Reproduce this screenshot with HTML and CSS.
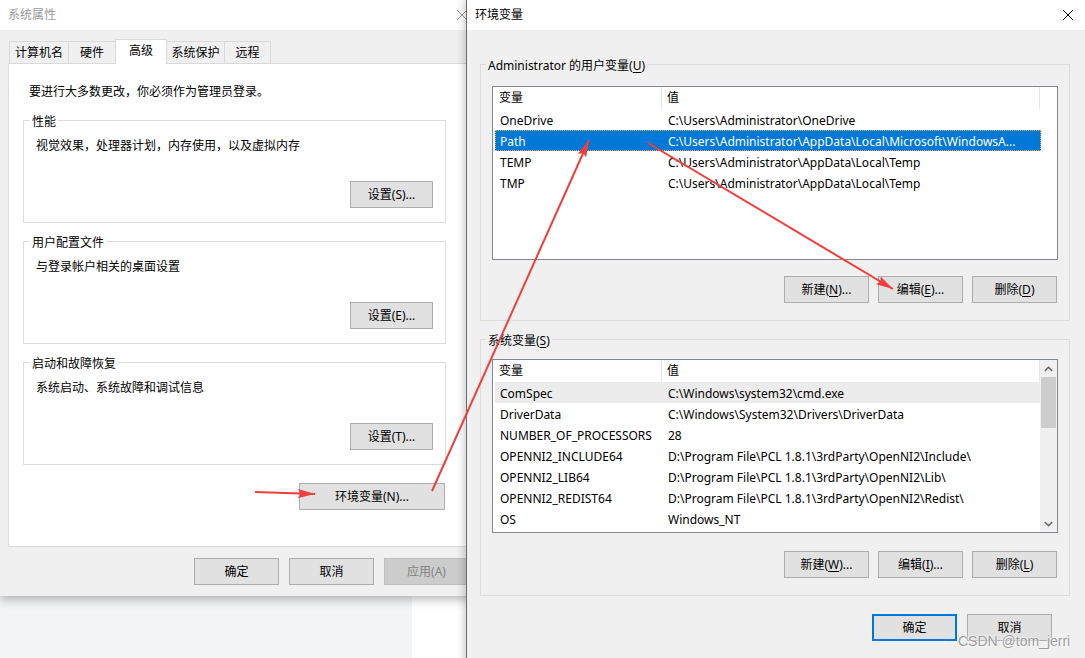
FILE: index.html
```html
<!DOCTYPE html>
<html lang="zh-CN">
<head>
<meta charset="UTF-8">
<title>环境变量</title>
<link rel="stylesheet" href="styles.css">
</head>
<body>
  <div class="win sysprop">
    <div class="titlebar">
      <span class="title">系统属性</span>
      <svg class="close" width="10" height="10" viewBox="0 0 10 10"><path d="M0 0L10 10M10 0L0 10"/></svg>
    </div>
    <div class="body">
      <div class="tabs">
        <span class="tab t1">计算机名</span>
        <span class="tab t2">硬件</span>
        <span class="tab t3 on">高级</span>
        <span class="tab t4">系统保护</span>
        <span class="tab t5">远程</span>
      </div>
      <div class="panel">
        <p class="intro">要进行大多数更改，你必须作为管理员登录。</p>
        <fieldset class="group first">
          <legend>性能</legend>
          <p>视觉效果，处理器计划，内存使用，以及虚拟内存</p>
          <div class="btnrow"><button class="btn small">设置(S)...</button></div>
        </fieldset>
        <fieldset class="group">
          <legend>用户配置文件</legend>
          <p>与登录帐户相关的桌面设置</p>
          <div class="btnrow"><button class="btn small">设置(E)...</button></div>
        </fieldset>
        <fieldset class="group">
          <legend>启动和故障恢复</legend>
          <p>系统启动、系统故障和调试信息</p>
          <div class="btnrow"><button class="btn small">设置(T)...</button></div>
        </fieldset>
        <div class="btnrow env-row"><button class="btn wide">环境变量(N)...</button></div>
      </div>
      <div class="dlg-buttons">
        <button class="btn">确定</button>
        <button class="btn">取消</button>
        <button class="btn" disabled>应用(A)</button>
      </div>
    </div>
  </div>

  <div class="win envvars">
    <div class="titlebar">
      <span class="title">环境变量</span>
      <svg class="close" width="10" height="10" viewBox="0 0 10 10"><path d="M0 0L10 10M10 0L0 10"/></svg>
    </div>
    <div class="body">
      <fieldset class="group user">
        <legend>Administrator 的用户变量(<u>U</u>)</legend>
        <div class="lv">
          <div class="lv-main">
            <div class="lv-head"><span class="c1">变量</span><span class="c2">值</span></div>
            <div class="lv-row"><span class="c1">OneDrive</span><span class="c2">C:\Users\Administrator\OneDrive</span></div>
            <div class="lv-row sel"><span class="c1">Path</span><span class="c2">C:\Users\Administrator\AppData\Local\Microsoft\WindowsA...</span></div>
            <div class="lv-row"><span class="c1">TEMP</span><span class="c2">C:\Users\Administrator\AppData\Local\Temp</span></div>
            <div class="lv-row"><span class="c1">TMP</span><span class="c2">C:\Users\Administrator\AppData\Local\Temp</span></div>
          </div>
        </div>
        <div class="btnrow">
          <button class="btn">新建(<u>N</u>)...</button>
          <button class="btn">编辑(<u>E</u>)...</button>
          <button class="btn">删除(<u>D</u>)</button>
        </div>
      </fieldset>

      <fieldset class="group system">
        <legend>系统变量(<u>S</u>)</legend>
        <div class="lv">
          <div class="lv-main">
            <div class="lv-head"><span class="c1">变量</span><span class="c2">值</span></div>
            <div class="lv-row hover"><span class="c1">ComSpec</span><span class="c2">C:\Windows\system32\cmd.exe</span></div>
            <div class="lv-row"><span class="c1">DriverData</span><span class="c2">C:\Windows\System32\Drivers\DriverData</span></div>
            <div class="lv-row"><span class="c1">NUMBER_OF_PROCESSORS</span><span class="c2">28</span></div>
            <div class="lv-row"><span class="c1">OPENNI2_INCLUDE64</span><span class="c2">D:\Program File\PCL 1.8.1\3rdParty\OpenNI2\Include\</span></div>
            <div class="lv-row"><span class="c1">OPENNI2_LIB64</span><span class="c2">D:\Program File\PCL 1.8.1\3rdParty\OpenNI2\Lib\</span></div>
            <div class="lv-row"><span class="c1">OPENNI2_REDIST64</span><span class="c2">D:\Program File\PCL 1.8.1\3rdParty\OpenNI2\Redist\</span></div>
            <div class="lv-row"><span class="c1">OS</span><span class="c2">Windows_NT</span></div>
          </div>
          <div class="sb">
            <div class="sb-btn"><svg width="9" height="6" viewBox="0 0 9 6"><polyline points="0.8,5 4.5,1.3 8.2,5"/></svg></div>
            <div class="sb-thumb"></div>
            <div class="sb-track"></div>
            <div class="sb-btn"><svg width="9" height="6" viewBox="0 0 9 6"><polyline points="0.8,1 4.5,4.7 8.2,1"/></svg></div>
          </div>
        </div>
        <div class="btnrow">
          <button class="btn">新建(<u>W</u>)...</button>
          <button class="btn">编辑(<u>I</u>)...</button>
          <button class="btn">删除(<u>L</u>)</button>
        </div>
      </fieldset>

      <div class="dlg-buttons">
        <button class="btn default">确定</button>
        <button class="btn">取消</button>
      </div>
    </div>
  </div>

  <!-- red annotation arrows drawn over both dialogs -->
  <svg class="marks" width="1085" height="658" viewBox="0 0 1085 658">
    <defs>
      <marker id="head" markerUnits="userSpaceOnUse" markerWidth="18" markerHeight="10" refX="17" refY="5" orient="auto">
        <path d="M0 0.5L17 5L0 9.5L2.5 5Z"/>
      </marker>
    </defs>
    <g class="arrows">
      <line x1="255" y1="492" x2="315" y2="494" marker-end="url(#head)"/>
      <line x1="432" y1="491" x2="589" y2="140" marker-end="url(#head)"/>
      <line x1="648" y1="143" x2="893" y2="289" marker-end="url(#head)"/>
    </g>
  </svg>

  <div class="watermark">CSDN @tom_jerri</div>
</body>
</html>
```

FILE: styles.css
```css
* {
  box-sizing: border-box;
}
body {
  margin: 0;
  width: 1085px;
  height: 658px;
  overflow: hidden;
  position: relative;
  font: 12px/16px "Noto Sans", "Noto Sans CJK SC", sans-serif;
  color: #000;
  background: linear-gradient(to right, #f3f4f6 412px, #fff 412px);
}
p {
  margin: 0;
}
u {
  text-underline-offset: 2px;
}

/* windows */
.win {
  position: absolute;
  top: 0;
  background: #f0f0f0;
}
.sysprop {
  left: 0;
  width: 480px;
  height: 596px;
  box-shadow: 0 3px 10px rgba(0, 0, 0, 0.3);
}
.envvars {
  left: 466px;
  width: 619px;
  height: 680px;
  border-left: 1px solid #6b6b6b;
  box-shadow: -2px 0 8px rgba(0, 0, 0, 0.2);
}
.titlebar {
  height: 30px;
  background: #fff;
  display: flex;
  align-items: center;
  justify-content: space-between;
  padding: 0 13px 0 8px;
}
.envvars .titlebar {
  padding: 0 12px 0 8px;
}
.sysprop .title {
  color: #9a9a9a;
}
.close {
  fill: none;
  stroke: #000;
  stroke-width: 1;
}
.sysprop .close {
  stroke: #999;
}

/* buttons */
.btn {
  font: inherit;
  width: 85px;
  height: 27px;
  padding: 0;
  line-height: 25px;
  color: #000;
  background: #e1e1e1;
  border: 1px solid #adadad;
}
.btn.small {
  width: 83px;
}
.btn.wide {
  width: 146px;
}
.btn:disabled {
  background: #ccc;
  border-color: #bfbfbf;
  color: #838383;
}
.btn.default {
  border: 2px solid #0078d7;
  line-height: 23px;
}
.btnrow {
  display: flex;
  justify-content: flex-end;
}

/* system properties */
.sysprop .body {
  padding: 11px 8px 0 8px;
}
.tabs {
  display: flex;
  align-items: flex-end;
  height: 22px;
  margin-left: 1px;
}
.tab {
  height: 22px;
  line-height: 21px;
  text-align: center;
  background: #f0f0f0;
  border: 1px solid #d9d9d9;
  border-bottom: 0;
  margin-right: -1px;
}
.tab.on {
  height: 25px;
  margin-bottom: -1px;
  background: #fff;
  position: relative;
  z-index: 1;
}
.t1 { width: 60px; }
.t2 { width: 48px; }
.t3 { width: 52px; }
.t4 { width: 59px; }
.t5 { width: 47px; }
.panel {
  height: 484px;
  background: #fff;
  border: 1px solid #d9d9d9;
  padding: 18px 0 0 14px;
}
.intro {
  padding: 2px 0 0 6px;
}
.group {
  margin: 9px 0 0;
  padding: 8px 12px 14px;
  border: 1px solid #dcdcdc;
  min-inline-size: 0;
}
.sysprop .group {
  width: 423px;
}
.sysprop .group.first {
  margin-top: 11px;
}
.group legend {
  margin-left: -6px;
  padding: 3px 2px 0;
  line-height: 16px;
}
.sysprop .group .btnrow {
  margin-top: 27px;
}
.env-row {
  width: 423px;
  margin-top: 18px;
  padding-right: 1px;
}
.dlg-buttons {
  display: flex;
  justify-content: flex-end;
  gap: 10px;
  margin-top: 11px;
  padding-right: 3px;
}

/* environment variables */
.envvars .body {
  padding: 25px 15px 0 13px;
}
.envvars .group {
  padding: 0 11px 17px;
}
.envvars .group.user {
  margin-top: 0;
}
.envvars .btnrow {
  gap: 9px;
  padding-right: 1px;
  margin-top: 16px;
}
.envvars .system .btnrow {
  margin-top: 18px;
}
.lv {
  display: flex;
  height: 174px;
  margin-top: 12px;
  background: #fff;
  border: 1px solid #828790;
  overflow: hidden;
}
.system .lv {
  margin-top: 10px;
}
.lv-main {
  flex: 1;
  min-width: 0;
}
.lv-head {
  display: flex;
  height: 22px;
  line-height: 22px;
}
.lv-head .c1 {
  width: 169px;
  padding-left: 6px;
  border-right: 1px solid #e5e5e5;
}
.lv-head .c2 {
  width: 378px;
  padding-left: 5px;
  border-right: 1px solid #e5e5e5;
}
.lv-row {
  display: flex;
  width: 546px;
  height: 21px;
  margin-left: 2px;
  padding-top: 1px;
  line-height: 21px;
  white-space: nowrap;
}
.lv-row .c1 {
  flex: 0 0 168px;
  padding-left: 5px;
  overflow: hidden;
}
.lv-row .c2 {
  flex: 1;
  padding-left: 5px;
  overflow: hidden;
}
.lv-row.sel {
  background: #0078d7;
  color: #fff;
  outline: 1px dotted #e9a54a;
  outline-offset: -1px;
}
.lv-row.hover {
  background: #ececec;
}
.sb {
  flex: 0 0 17px;
  display: flex;
  flex-direction: column;
  background: #f0f0f0;
}
.sb-btn {
  height: 17px;
  display: flex;
  align-items: center;
  justify-content: center;
}
.sb-btn svg {
  fill: none;
  stroke: #606060;
  stroke-width: 1.4;
}
.sb-thumb {
  height: 51px;
  margin: 0 1px;
  background: #cdcdcd;
}
.sb-track {
  flex: 1;
}
.envvars .dlg-buttons {
  margin-top: 18px;
  padding-right: 18px;
}

/* overlays */
.marks {
  position: absolute;
  top: 0;
  left: 0;
  z-index: 5;
}
.arrows {
  stroke: #f23d3d;
  stroke-width: 2;
}
#head path {
  fill: #f23d3d;
  stroke: none;
}
.watermark {
  position: absolute;
  left: 958px;
  top: 632px;
  z-index: 6;
  font: 14px/18px "Liberation Sans", Arial, sans-serif;
  color: #9c9c9c;
  text-shadow: 0 0 2px #fff, 0 0 2px #fff;
}
```
